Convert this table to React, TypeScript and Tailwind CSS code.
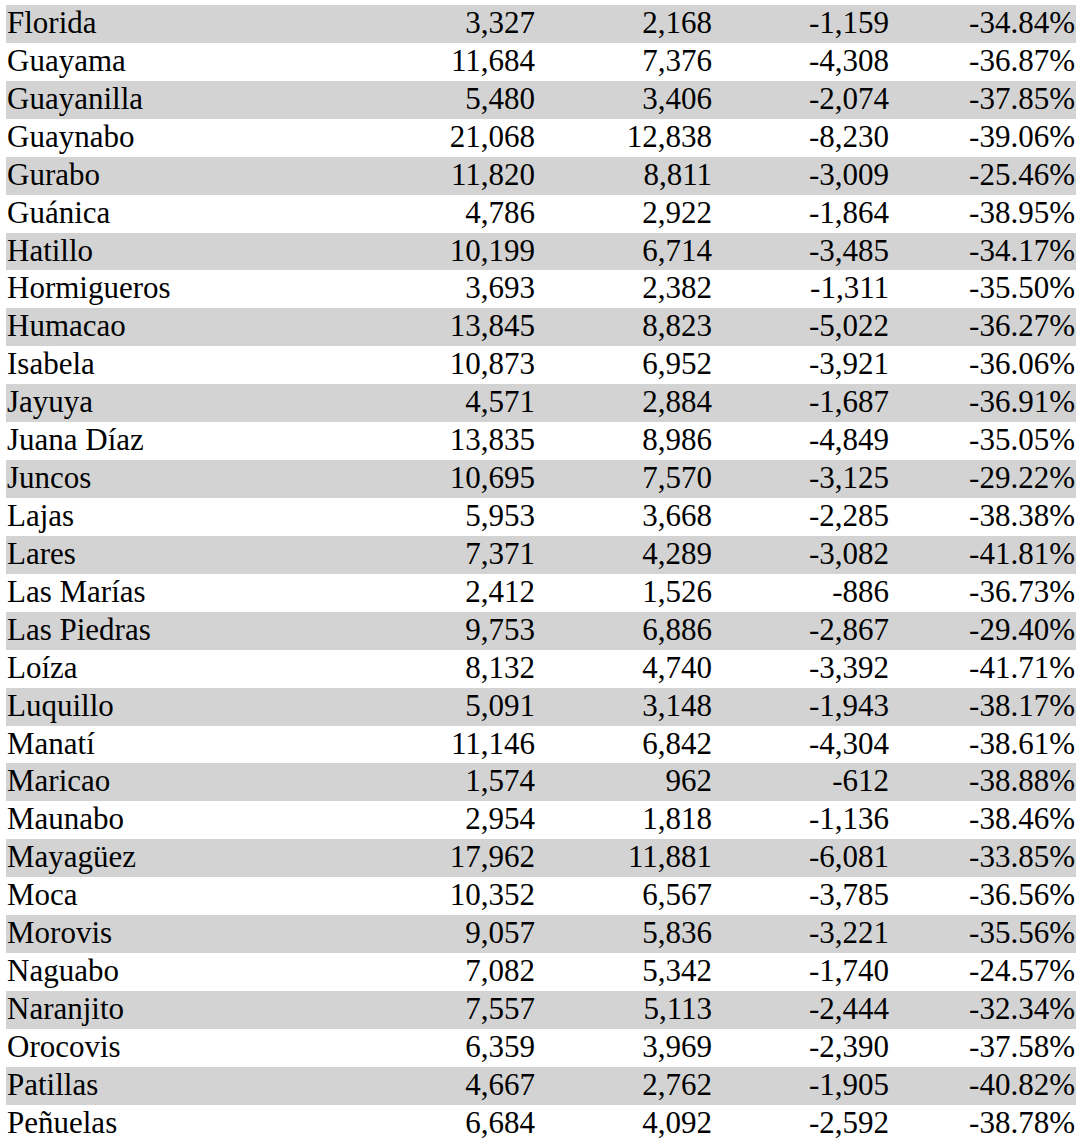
const rows: [string, string, string, string, string][] = [
  ['Florida', '3,327', '2,168', '-1,159', '-34.84%'],
  ['Guayama', '11,684', '7,376', '-4,308', '-36.87%'],
  ['Guayanilla', '5,480', '3,406', '-2,074', '-37.85%'],
  ['Guaynabo', '21,068', '12,838', '-8,230', '-39.06%'],
  ['Gurabo', '11,820', '8,811', '-3,009', '-25.46%'],
  ['Guánica', '4,786', '2,922', '-1,864', '-38.95%'],
  ['Hatillo', '10,199', '6,714', '-3,485', '-34.17%'],
  ['Hormigueros', '3,693', '2,382', '-1,311', '-35.50%'],
  ['Humacao', '13,845', '8,823', '-5,022', '-36.27%'],
  ['Isabela', '10,873', '6,952', '-3,921', '-36.06%'],
  ['Jayuya', '4,571', '2,884', '-1,687', '-36.91%'],
  ['Juana Díaz', '13,835', '8,986', '-4,849', '-35.05%'],
  ['Juncos', '10,695', '7,570', '-3,125', '-29.22%'],
  ['Lajas', '5,953', '3,668', '-2,285', '-38.38%'],
  ['Lares', '7,371', '4,289', '-3,082', '-41.81%'],
  ['Las Marías', '2,412', '1,526', '-886', '-36.73%'],
  ['Las Piedras', '9,753', '6,886', '-2,867', '-29.40%'],
  ['Loíza', '8,132', '4,740', '-3,392', '-41.71%'],
  ['Luquillo', '5,091', '3,148', '-1,943', '-38.17%'],
  ['Manatí', '11,146', '6,842', '-4,304', '-38.61%'],
  ['Maricao', '1,574', '962', '-612', '-38.88%'],
  ['Maunabo', '2,954', '1,818', '-1,136', '-38.46%'],
  ['Mayagüez', '17,962', '11,881', '-6,081', '-33.85%'],
  ['Moca', '10,352', '6,567', '-3,785', '-36.56%'],
  ['Morovis', '9,057', '5,836', '-3,221', '-35.56%'],
  ['Naguabo', '7,082', '5,342', '-1,740', '-24.57%'],
  ['Naranjito', '7,557', '5,113', '-2,444', '-32.34%'],
  ['Orocovis', '6,359', '3,969', '-2,390', '-37.58%'],
  ['Patillas', '4,667', '2,762', '-1,905', '-40.82%'],
  ['Peñuelas', '6,684', '4,092', '-2,592', '-38.78%'],
]

export default function App() {
  return (
    <div className="min-h-screen bg-white pt-[5px] pl-[6px] text-black font-[family-name:'Liberation_Serif','Times_New_Roman',serif] text-[31px]">
      <div className="w-[1070px]">
        {rows.map((r, i) => (
          <div
            key={r[0]}
            className={`grid grid-cols-[353px_177px_177px_177px_186px] h-[37.93px] leading-[36px] ${i % 2 === 0 ? 'bg-[#d3d3d3]' : ''}`}
          >
            <div className="pl-[1px] whitespace-nowrap">{r[0]}</div>
            <div className="pr-[1px] text-right">{r[1]}</div>
            <div className="pr-[1px] text-right">{r[2]}</div>
            <div className="pr-[1px] text-right">{r[3]}</div>
            <div className="pr-[1px] text-right">{r[4]}</div>
          </div>
        ))}
      </div>
    </div>
  )
}
